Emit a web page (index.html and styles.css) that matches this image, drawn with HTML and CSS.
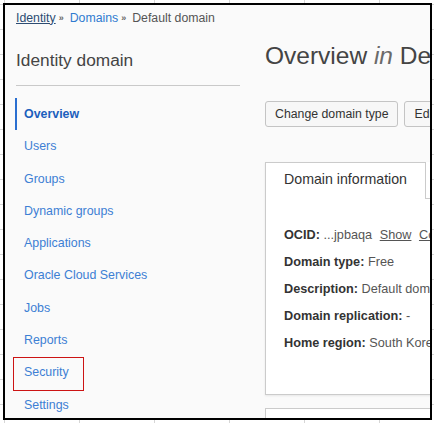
FILE: index.html
```html
<!DOCTYPE html>
<html lang="en">
<head>
<meta charset="utf-8">
<title>Identity domain - Overview</title>
<link rel="stylesheet" href="styles.css">
</head>
<body>
<div class="window">
  <nav class="crumbs">
    <a class="crumb-root" href="#">Identity</a><span class="sep">»</span><a class="crumb-link" href="#">Domains</a><span class="sep">»</span><span>Default domain</span>
  </nav>
  <div class="layout">
    <aside class="sidebar">
      <h2 class="side-title">Identity domain</h2>
      <ul class="nav">
        <li><a class="active" href="#">Overview</a></li>
        <li><a href="#">Users</a></li>
        <li><a href="#">Groups</a></li>
        <li><a href="#">Dynamic groups</a></li>
        <li><a href="#">Applications</a></li>
        <li><a href="#">Oracle Cloud Services</a></li>
        <li><a href="#">Jobs</a></li>
        <li><a href="#">Reports</a></li>
        <li class="marked"><a href="#">Security</a></li>
        <li><a href="#">Settings</a></li>
      </ul>
    </aside>
    <main class="main">
      <h1 class="title">Overview <i>in</i> Default domain Domain</h1>
      <div class="actions">
        <button class="btn">Change domain type</button>
        <button class="btn">Edit domain</button>
      </div>
      <section class="card">
        <div class="tabs">
          <div class="tab">Domain information</div>
        </div>
        <div class="card-body">
          <div class="row"><b>OCID:</b> ...jpbaqa <a class="ul" href="#">Show</a> <a class="ul" href="#">Copy</a></div>
          <div class="row"><b>Domain type:</b> Free</div>
          <div class="row"><b>Description:</b> Default domain for the tenancy</div>
          <div class="row"><b>Domain replication:</b> -</div>
          <div class="row"><b>Home region:</b> South Korea Central (Chuncheon)</div>
        </div>
      </section>
      <section class="card2"></section>
    </main>
  </div>
</div>
</body>
</html>
```
FILE: styles.css
```css
html, body {
  margin: 0;
  padding: 0;
}
body {
  background-color: #ffffff;
  background-image:
    linear-gradient(to right, #d6d6d6 1px, transparent 1px),
    linear-gradient(to bottom, #d6d6d6 1px, transparent 1px);
  background-size: 75px 25px;
  background-position: 4px 4px;
  font-family: "Liberation Sans", Arial, sans-serif;
}
.window {
  box-sizing: border-box;
  width: 429px;
  height: 417px;
  margin: 3px 0 0 3px;
  border: 2px solid #000;
  background: #fafafa;
  overflow: hidden;
  padding: 4.6px 0 0 11px;
}
.crumbs {
  font-size: 12.3px;
  line-height: 16px;
  color: #555;
  white-space: nowrap;
}
.crumb-root {
  color: #2d4c72;
  text-decoration: underline;
}
.crumb-link {
  color: #2f7ad0;
  text-decoration: none;
}
.sep {
  font-size: 9px;
  font-weight: bold;
  color: #666;
  margin: 0 6px 0 3px;
  vertical-align: 1px;
}
.layout {
  display: flex;
  gap: 25px;
}
.sidebar {
  width: 224px;
  flex: none;
}
.side-title {
  margin: 22.7px 0 0;
  font-size: 17.3px;
  line-height: 24px;
  font-weight: normal;
  color: #444;
  padding-bottom: 12.7px;
  border-bottom: 1px solid #c9c9c9;
}
.nav {
  list-style: none;
  margin: 12px 0 0;
  padding: 0;
}
.nav li {
  position: relative;
}
.nav a {
  display: block;
  font-size: 12.4px;
  line-height: 32.3px;
  margin-left: -1px;
  padding-left: 7px;
  border-left: 2px solid transparent;
  color: #3d7fd4;
  text-decoration: none;
}
.nav a.active {
  border-left-color: #2a6fd0;
  color: #1d5fbd;
  font-weight: bold;
}
.marked::after {
  content: "";
  position: absolute;
  left: -3px;
  top: 0.6px;
  width: 71px;
  height: 34px;
  box-sizing: border-box;
  border: 1px solid #cc1414;
  pointer-events: none;
}
.main {
  flex: 1;
  min-width: 0;
}
.title {
  margin: 14.3px 0 0;
  font-size: 24.5px;
  line-height: 32px;
  font-weight: normal;
  color: #444;
  white-space: nowrap;
}
.title i {
  color: #6a6a6a;
}
.actions {
  display: flex;
  gap: 6px;
  margin-top: 29.1px;
}
.btn {
  flex: none;
  font-family: "Liberation Sans", Arial, sans-serif;
  font-size: 12.3px;
  line-height: 23px;
  padding: 1px 9px 0;
  margin: 0;
  border: 1px solid #c4c4c4;
  border-radius: 3px;
  background: #f7f7f7;
  color: #333;
  white-space: nowrap;
}
.card {
  width: 600px;
  margin-top: 35px;
  background: #fff;
  border: 1px solid #cbcbcb;
  border-top: none;
  box-shadow: 0 1px 2px rgba(0, 0, 0, 0.08);
}
.tabs {
  display: flex;
  border-bottom: 1px solid #cbcbcb;
}
.tab {
  background: #fff;
  border-top: 1px solid #cbcbcb;
  border-right: 1px solid #cbcbcb;
  margin-bottom: -1px;
  padding: 0 18px 3px;
  font-size: 14.2px;
  line-height: 33px;
  color: #333;
  white-space: nowrap;
}
.card-body {
  padding: 23.2px 18px 36.8px;
}
.row {
  font-size: 12.7px;
  line-height: 27px;
  color: #555;
  white-space: nowrap;
}
.row b {
  color: #333;
}
.ul {
  color: #555;
  text-decoration: underline;
  margin-left: 4px;
}
.card2 {
  width: 600px;
  height: 40px;
  margin-top: 13px;
  background: #fff;
  border: 1px solid #cbcbcb;
}
```
